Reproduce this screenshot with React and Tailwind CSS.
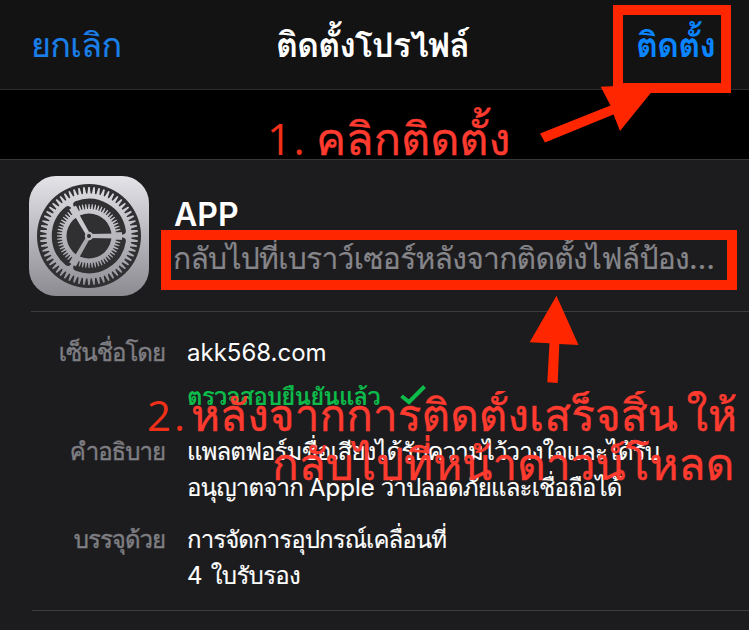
const THAI = "font-['Inter','Loma','Noto_Sans',sans-serif]";

// Closed outline of a toothed wheel centred on 60,60.
function gearPath(count, root, tip, rootHalf, tipHalf) {
  const step = (Math.PI * 2) / count;
  const pts = [];
  for (let i = 0; i < count; i++) {
    const a = i * step;
    const corners = [
      [root, -rootHalf],
      [tip, -tipHalf],
      [tip, tipHalf],
      [root, rootHalf],
    ];
    corners.forEach(([r, k]) => {
      const t = a + k * step;
      pts.push(`${(60 + r * Math.cos(t)).toFixed(2)},${(60 + r * Math.sin(t)).toFixed(2)}`);
    });
  }
  return `M${pts.join("L")}Z`;
}

function polar(r, deg) {
  const t = (deg * Math.PI) / 180;
  return `${(60 + r * Math.cos(t)).toFixed(2)} ${(60 + r * Math.sin(t)).toFixed(2)}`;
}

function SettingsIcon() {
  return (
    <svg viewBox="0 0 120 120" className="h-[120px] w-[120px] shrink-0">
      <defs>
        <linearGradient id="metal" gradientUnits="userSpaceOnUse" x1="0" y1="0" x2="0" y2="120">
          <stop offset="0" stopColor="#e3e3e8" />
          <stop offset="1" stopColor="#8c8b92" />
        </linearGradient>
      </defs>
      <rect width="120" height="120" rx="27" fill="url(#metal)" />
      <circle cx="60" cy="60" r="52" fill="#303032" />
      <path d={gearPath(60, 42.5, 49, 0.36, 0.15)} fill="url(#metal)" />
      {/* Three dark channels with rounded ends between the spokes */}
      {[0, 120, 240].map((a) => (
        <path
          key={a}
          d={`M${polar(33.5, a + 9)}A33.5 33.5 0 0 1 ${polar(33.5, a + 111)}`}
          fill="none"
          stroke="#303032"
          strokeWidth="7.5"
          strokeLinecap="round"
        />
      ))}
      <circle cx="60" cy="60" r="32" fill="#303032" />
      <path d={gearPath(60, 27, 32, 0.36, 0.15)} fill="url(#metal)" />
      <circle cx="60" cy="60" r="22.5" fill="#303032" />
      {[
        [0, "#b8b8bd"],
        [120, "#a6a6ab"],
        [240, "#cacace"],
      ].map(([angle, color]) => (
        <path
          key={angle}
          transform={`rotate(${angle} 60 60)`}
          d="M60 58L88 57.6L93 56V64L88 62.4L60 62Z"
          fill={color}
        />
      ))}
      <circle cx="60" cy="60" r="4.2" fill="#b8b8bd" />
      <circle cx="60" cy="60" r="2" fill="#303032" />
    </svg>
  );
}

function Row({ label, children }) {
  return (
    <div className="flex gap-[21px]">
      <div className="w-[166px] shrink-0 whitespace-nowrap pr-px text-right tracking-[-1px] text-[#7e7e83] [-webkit-text-stroke:0.4px]">{label}</div>
      <div className="whitespace-nowrap text-white">{children}</div>
    </div>
  );
}

export default function App() {
  return (
    <div className={`relative h-[630px] w-[749px] overflow-hidden bg-[#1c1c1e] ${THAI}`}>
      <header className="flex h-[90px] items-start justify-between whitespace-nowrap border-b border-[#2c2c2e] bg-[#131313] pl-[31px] pr-[35px] pt-[21px] text-[34px] leading-[48px]">
        <span className="w-[90px] tracking-[-0.6px] text-[#1a7fe8] [-webkit-text-stroke:0.2px]">ยกเลิก</span>
        <span className="w-[205px] font-bold tracking-[-1px] text-white">ติดตั้งโปรไฟล์</span>
        <span className="w-[78px] font-bold tracking-[-1px] text-[#0a84ff]">ติดตั้ง</span>
      </header>
      <div className="h-[70px] border-b border-[#38383a] bg-black" />

      <section className="flex h-[151px] gap-[25px] pl-[29px] pt-[16px]">
        <SettingsIcon />
        <div className="whitespace-nowrap pt-[18px]">
          <div className="text-[32px] font-semibold leading-[42px] text-white">APP</div>
          <div className="-ml-px text-[30px] leading-[44px] tracking-[-0.72px] text-[#85858a] [-webkit-text-stroke:0.2px]">กลับไปที่เบราว์เซอร์หลังจากติดตั้งไฟล์ป้อง…</div>
        </div>
      </section>

      <div className="ml-[31px] h-px bg-[#3d3d40]" />
      <section className="flex flex-col pt-[23px] text-[24px] leading-9">
        <Row label="เซ็นชื่อโดย">
          <div>akk568.com</div>
          <div className="mt-2 flex items-center gap-5 font-bold text-[#0dbb4a]">
            <span className="tracking-[-0.85px]">ตรวจสอบยืนยันแล้ว</span>
            <svg viewBox="0 0 26 20" className="mb-1 h-5 w-[26px]" fill="none" stroke="#0dbb4a" strokeWidth="4">
              <path d="M1.5 11L9 17L24.5 1.5" />
            </svg>
          </div>
        </Row>
        <div className="h-[19px]" />
        <Row label="คำอธิบาย">
          <div className="tracking-[-0.9px] [-webkit-text-stroke:0.15px]">แพลตฟอร์มชื่อเสียงได้รับความไว้วางใจและได้รับ</div>
          <div className="tracking-[-0.8px] [-webkit-text-stroke:0.15px]">อนุญาตจาก <span className="tracking-normal">Apple</span> ว่าปลอดภัยและเชื่อถือได้</div>
        </Row>
        <div className="h-4" />
        <Row label="บรรจุด้วย">
          <div className="tracking-[-0.9px] [-webkit-text-stroke:0.15px]">การจัดการอุปกรณ์เคลื่อนที่</div>
          <div className="tracking-[-0.7px] [word-spacing:3px] [-webkit-text-stroke:0.15px]">4 ใบรับรอง</div>
        </Row>
      </section>
      <div className="ml-8 mt-[16px] h-px bg-[#3d3d40]" />

      {/* Step-by-step annotations over the screen */}
      <div className="absolute left-[613px] top-[5px] h-[88px] w-[118px] border-[10px] border-[#ff2600]" />
      <div className="absolute left-[161px] top-[230px] h-[60px] w-[576px] border-[10px] border-[#ff2600]" />
      <svg className="absolute left-0 top-0 h-[630px] w-[749px]" viewBox="0 0 749 630" fill="#ff2600">
        <path d="M540 133.5L610.5 105.5L600.7 86.7L658 84L620 131L613.5 114.5L545 142.5Z" />
        <path d="M556.5 295.7L578.5 345L559.3 344L557.7 383L547.3 382.3L549.5 343.3L529.7 342.3Z" />
      </svg>
      <div className="absolute left-[267px] top-[109px] whitespace-nowrap font-['Open_Sans',sans-serif] text-[43px] leading-[60px] tracking-[2px] text-[#f03018]">1.</div>
      <div className="absolute left-[316px] top-[109px] whitespace-nowrap text-[45px] leading-[60px] text-[#ff3b30] [-webkit-text-stroke:0.4px]">คลิกติดตั้ง</div>
      <div className="absolute left-[147px] top-[385px] whitespace-nowrap font-['Open_Sans',sans-serif] text-[42px] leading-[60px] tracking-[3px] text-[#f03018]">2.</div>
      <div className="absolute left-[191px] top-[391px] h-[60px] overflow-hidden whitespace-nowrap text-[44px] leading-[48px] tracking-[0.1px] text-[#ff3b30] [word-spacing:-4px] [-webkit-text-stroke:0.4px]">หลังจากการติดตั้งเสร็จสิ้น ให้</div>
      <div className="absolute left-[272px] top-[435px] h-[60px] overflow-hidden whitespace-nowrap text-[44px] leading-[58px] tracking-[0.1px] text-[#ff3b30] [-webkit-text-stroke:0.4px]">กลับไปที่หน้าดาวน์โหลด</div>
    </div>
  );
}
